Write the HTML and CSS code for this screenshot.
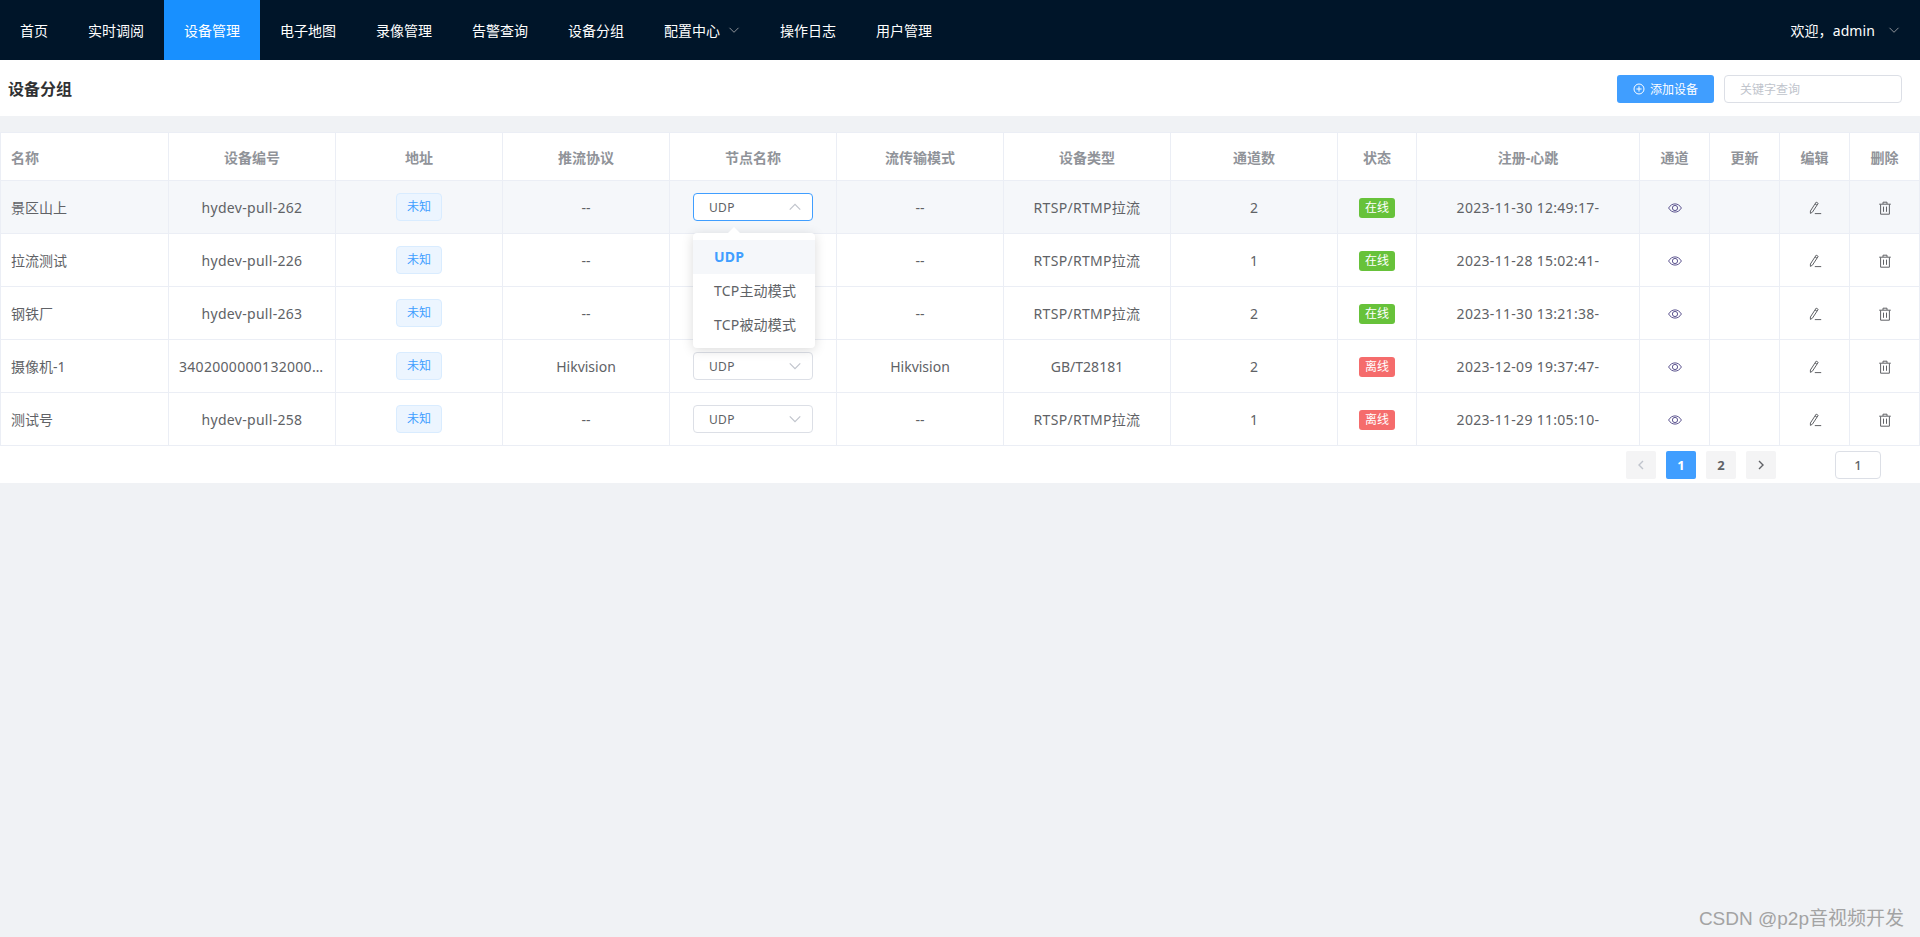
FILE: index.html
```html
<!DOCTYPE html>
<html lang="zh-CN">
<head>
    <meta charset="UTF-8">
    <meta name="viewport" content="width=device-width, initial-scale=1.0">
    <title>设备分组</title>
    <link rel="stylesheet" href="styles.css">
</head>
<body>
    <svg class="icon-defs" width="0" height="0">
        <symbol id="i-eye" viewBox="0 0 14 14">
            <path d="M0.6 7C2.2 4.3 4.4 2.9 7 2.9S11.8 4.3 13.4 7C11.8 9.7 9.6 11.1 7 11.1S2.2 9.7 0.6 7Z" fill="none" stroke="currentColor"/>
            <circle cx="7" cy="7" r="2.6" fill="none" stroke="currentColor"/>
        </symbol>
        <symbol id="i-edit" viewBox="0 0 14 14">
            <path d="M8.2 1.1L10.2 2.4 4.4 11.2 2.4 12.4 2.4 10Z M7 2.9L9 4.2" fill="none" stroke="currentColor"/>
            <path d="M6.8 12.6H13.2" fill="none" stroke="currentColor"/>
        </symbol>
        <symbol id="i-trash" viewBox="0 0 14 14">
            <path d="M1.2 3.2H12.8 M5 3V1.2H9V3 M2.6 3.4V13.2H11.4V3.4 M5.5 5.6V10.8 M8.5 5.6V10.8" fill="none" stroke="currentColor"/>
        </symbol>
        <symbol id="i-down" viewBox="0 0 12 12">
            <path d="M1.5 3.8L6 8.3 10.5 3.8" fill="none" stroke="currentColor"/>
        </symbol>
    </svg>

    <nav class="topnav">
        <a class="nav-item" href="#">首页</a>
        <a class="nav-item" href="#">实时调阅</a>
        <a class="nav-item active" href="#">设备管理</a>
        <a class="nav-item" href="#">电子地图</a>
        <a class="nav-item" href="#">录像管理</a>
        <a class="nav-item" href="#">告警查询</a>
        <a class="nav-item" href="#">设备分组</a>
        <a class="nav-item" href="#">配置中心<svg class="nav-arrow"><use href="#i-down"/></svg></a>
        <a class="nav-item" href="#">操作日志</a>
        <a class="nav-item" href="#">用户管理</a>
        <a class="nav-user" href="#">欢迎，admin<svg class="nav-arrow"><use href="#i-down"/></svg></a>
    </nav>

    <div class="page-head">
        <h1>设备分组</h1>
        <div class="head-tools">
            <button class="btn-add">
                <svg class="plus" viewBox="0 0 12 12"><circle cx="6" cy="6" r="5" fill="none" stroke="currentColor"/><path d="M6 3.4V8.6M3.4 6H8.6" stroke="currentColor"/></svg>
                添加设备
            </button>
            <input class="search" type="text" placeholder="关键字查询">
        </div>
    </div>

    <div class="panel">
        <table class="grid">
            <colgroup>
                <col class="w-first"><col class="w-std"><col class="w-std"><col class="w-std">
                <col class="w-std"><col class="w-std"><col class="w-std"><col class="w-std">
                <col class="w-state"><col class="w-time">
                <col class="w-op"><col class="w-op"><col class="w-op"><col class="w-op">
            </colgroup>
            <thead>
                <tr>
                    <th class="left">名称</th><th>设备编号</th><th>地址</th><th>推流协议</th><th>节点名称</th>
                    <th>流传输模式</th><th>设备类型</th><th>通道数</th><th>状态</th><th>注册-心跳</th>
                    <th>通道</th><th>更新</th><th>编辑</th><th>删除</th>
                </tr>
            </thead>
            <tbody>
                <tr class="hover">
                    <td class="left">景区山上</td><td class="latin">hydev-pull-262</td><td><span class="tag">未知</span></td><td>--</td>
                    <td>
                        <div class="select open"><span class="latin">UDP</span><svg class="sel-arrow"><use href="#i-down"/></svg>
                            <div class="dropdown">
                                <ul>
                                    <li class="selected">UDP</li>
                                    <li>TCP主动模式</li>
                                    <li>TCP被动模式</li>
                                </ul>
                            </div>
                        </div>
                    </td>
                    <td>--</td><td class="latin">RTSP/RTMP拉流</td><td>2</td><td><span class="state on">在线</span></td><td class="latin">2023-11-30 12:49:17-</td>
                    <td><svg class="op eye"><use href="#i-eye"/></svg></td><td></td>
                    <td><svg class="op"><use href="#i-edit"/></svg></td><td><svg class="op"><use href="#i-trash"/></svg></td>
                </tr>
                <tr>
                    <td class="left">拉流测试</td><td class="latin">hydev-pull-226</td><td><span class="tag">未知</span></td><td>--</td>
                    <td><div class="select"><span class="latin">UDP</span><svg class="sel-arrow"><use href="#i-down"/></svg></div></td>
                    <td>--</td><td class="latin">RTSP/RTMP拉流</td><td>1</td><td><span class="state on">在线</span></td><td class="latin">2023-11-28 15:02:41-</td>
                    <td><svg class="op eye"><use href="#i-eye"/></svg></td><td></td>
                    <td><svg class="op"><use href="#i-edit"/></svg></td><td><svg class="op"><use href="#i-trash"/></svg></td>
                </tr>
                <tr>
                    <td class="left">钢铁厂</td><td class="latin">hydev-pull-263</td><td><span class="tag">未知</span></td><td>--</td>
                    <td><div class="select"><span class="latin">UDP</span><svg class="sel-arrow"><use href="#i-down"/></svg></div></td>
                    <td>--</td><td class="latin">RTSP/RTMP拉流</td><td>2</td><td><span class="state on">在线</span></td><td class="latin">2023-11-30 13:21:38-</td>
                    <td><svg class="op eye"><use href="#i-eye"/></svg></td><td></td>
                    <td><svg class="op"><use href="#i-edit"/></svg></td><td><svg class="op"><use href="#i-trash"/></svg></td>
                </tr>
                <tr>
                    <td class="left">摄像机-1</td><td class="latin"><div class="clip">34020000001320000001</div></td><td><span class="tag">未知</span></td><td>Hikvision</td>
                    <td><div class="select"><span class="latin">UDP</span><svg class="sel-arrow"><use href="#i-down"/></svg></div></td>
                    <td>Hikvision</td><td>GB/T28181</td><td>2</td><td><span class="state off">离线</span></td><td class="latin">2023-12-09 19:37:47-</td>
                    <td><svg class="op eye"><use href="#i-eye"/></svg></td><td></td>
                    <td><svg class="op"><use href="#i-edit"/></svg></td><td><svg class="op"><use href="#i-trash"/></svg></td>
                </tr>
                <tr>
                    <td class="left">测试号</td><td class="latin">hydev-pull-258</td><td><span class="tag">未知</span></td><td>--</td>
                    <td><div class="select"><span class="latin">UDP</span><svg class="sel-arrow"><use href="#i-down"/></svg></div></td>
                    <td>--</td><td class="latin">RTSP/RTMP拉流</td><td>1</td><td><span class="state off">离线</span></td><td class="latin">2023-11-29 11:05:10-</td>
                    <td><svg class="op eye"><use href="#i-eye"/></svg></td><td></td>
                    <td><svg class="op"><use href="#i-edit"/></svg></td><td><svg class="op"><use href="#i-trash"/></svg></td>
                </tr>
            </tbody>
        </table>

        <div class="pager">
            <button class="pg-btn disabled"><svg viewBox="0 0 12 12"><path d="M8 2L4 6 8 10" fill="none" stroke="currentColor" stroke-width="1.4"/></svg></button>
            <button class="pg-btn current">1</button>
            <button class="pg-btn">2</button>
            <button class="pg-btn"><svg viewBox="0 0 12 12"><path d="M4 2L8 6 4 10" fill="none" stroke="currentColor" stroke-width="1.4"/></svg></button>
            <input class="pg-jump" type="text" value="1">
        </div>
    </div>

    <div class="watermark">CSDN @p2p音视频开发</div>
</body>
</html>
```

FILE: styles.css
```css
* {
    margin: 0;
    padding: 0;
    box-sizing: border-box;
}

body {
    min-height: 100vh;
    background: #f0f2f5;
    color: #606266;
    font-family: "Noto Sans", "Noto Sans CJK SC", sans-serif;
    font-size: 14px;
}

.icon-defs {
    display: block;
    height: 0;
}

/* top menu */
.topnav {
    display: flex;
    height: 60px;
    background: #001529;
}

.nav-item {
    display: flex;
    align-items: center;
    padding: 0 20px;
    color: #fff;
    font-size: 14px;
    text-decoration: none;
}

.nav-item.active {
    background: #1890ff;
}

.nav-arrow {
    width: 12px;
    height: 12px;
    margin-left: 8px;
    color: #909399;
}

.nav-user {
    display: flex;
    align-items: center;
    margin-left: auto;
    padding-right: 20px;
    color: #fff;
    letter-spacing: 0.1px;
    text-decoration: none;
}

.nav-user .nav-arrow {
    margin-left: 13px;
}

/* title bar */
.page-head {
    display: flex;
    justify-content: space-between;
    align-items: center;
    height: 56px;
    padding: 0 18px 0 8px;
    background: #fff;
}

.page-head h1 {
    color: #303133;
    font-size: 16px;
    font-weight: 700;
}

.head-tools {
    display: flex;
    gap: 10px;
    padding-top: 2px;
}

.btn-add {
    display: flex;
    justify-content: center;
    align-items: center;
    gap: 5px;
    width: 97px;
    height: 28px;
    border: none;
    border-radius: 3px;
    background: #409eff;
    color: #fff;
    font-family: inherit;
    font-size: 12px;
}

.plus {
    width: 12px;
    height: 12px;
}

.search {
    width: 178px;
    height: 28px;
    padding: 0 15px;
    border: 1px solid #dcdfe6;
    border-radius: 4px;
    font-family: inherit;
    font-size: 12px;
}

.search::placeholder {
    color: #c0c4cc;
}

/* table */
.panel {
    margin-top: 16px;
    background: #fff;
}

.grid {
    width: 1920px;
    table-layout: fixed;
    border-collapse: separate;
    border-spacing: 0;
    border-top: 1px solid #ebeef5;
    border-left: 1px solid #ebeef5;
}

.w-first { width: 168px; }
.w-std { width: 167px; }
.w-state { width: 79px; }
.w-time { width: 223px; }
.w-op { width: 70px; }

.grid th,
.grid td {
    border-right: 1px solid #ebeef5;
    border-bottom: 1px solid #ebeef5;
    padding: 0 10px;
    text-align: center;
    vertical-align: middle;
}

.grid th {
    height: 48px;
    color: #909399;
    font-size: 14px;
    font-weight: 700;
}

.grid td {
    height: 53px;
}

.grid .left {
    text-align: left;
}

.grid .hover td {
    background: #f5f7fa;
}

.latin {
    letter-spacing: 0.3px;
}

.clip {
    overflow: hidden;
    white-space: nowrap;
    text-overflow: ellipsis;
}

.tag {
    display: block;
    width: 46px;
    height: 28px;
    margin: 0 auto;
    border: 1px solid #d9ecff;
    border-radius: 4px;
    background: #ecf5ff;
    color: #409eff;
    font-size: 12px;
    line-height: 26px;
}

.state {
    display: block;
    width: 36px;
    height: 20px;
    margin: 2px auto 0;
    border-radius: 3px;
    color: #fff;
    font-size: 12px;
    line-height: 20px;
}

.state.on { background: #67c23a; }
.state.off { background: #f56c6c; }

.op {
    display: block;
    width: 14px;
    height: 14px;
    margin: 2px auto 0;
    color: #606266;
}

.op.eye {
    color: #5d5590;
}

/* node select */
.select {
    position: relative;
    display: flex;
    align-items: center;
    width: 120px;
    height: 28px;
    margin: 0 auto;
    padding-left: 15px;
    border: 1px solid #dcdfe6;
    border-radius: 4px;
    background: #fff;
    font-size: 12px;
    text-align: left;
}

.sel-arrow {
    width: 14px;
    height: 14px;
    margin-left: auto;
    margin-right: 10px;
    color: #c0c4cc;
}

.select.open {
    border-color: #409eff;
}

.select.open .sel-arrow {
    transform: rotate(180deg);
}

.dropdown {
    position: absolute;
    top: 39px;
    left: -1px;
    z-index: 5;
    width: 122px;
    padding: 7px 0 6px;
    border-radius: 4px;
    background: #fff;
    box-shadow: 0 2px 12px rgba(0, 0, 0, 0.15);
    font-size: 14px;
}

.dropdown::before {
    content: "";
    position: absolute;
    top: -6px;
    left: 35px;
    border-right: 6px solid transparent;
    border-bottom: 6px solid #fff;
    border-left: 6px solid transparent;
}

.dropdown ul {
    list-style: none;
}

.dropdown li {
    height: 34px;
    padding-left: 21px;
    letter-spacing: 0.2px;
    line-height: 34px;
    white-space: nowrap;
}

.dropdown .selected {
    background: #f5f7fa;
    color: #409eff;
    font-weight: 700;
}

/* pagination */
.pager {
    display: flex;
    align-items: center;
    height: 37px;
    padding-left: 1626px;
}

.pg-btn {
    display: flex;
    justify-content: center;
    align-items: center;
    width: 30px;
    height: 28px;
    margin-right: 10px;
    border: none;
    border-radius: 2px;
    background: #f4f4f5;
    color: #606266;
    font-family: inherit;
    font-size: 13px;
    font-weight: 700;
}

.pg-btn svg {
    width: 12px;
    height: 12px;
}

.pg-btn.disabled {
    color: #c0c4cc;
}

.pg-btn.current {
    background: #409eff;
    color: #fff;
}

.pg-jump {
    width: 46px;
    height: 28px;
    margin-left: 49px;
    border: 1px solid #dcdfe6;
    border-radius: 4px;
    color: #606266;
    font-family: inherit;
    font-size: 13px;
    font-weight: 500;
    text-align: center;
}

/* csdn image watermark */
.watermark {
    position: absolute;
    top: 903px;
    right: 16px;
    color: #a3a3a3;
    font-family: "Liberation Sans", "Noto Sans CJK SC", sans-serif;
    font-size: 19px;
}
```
